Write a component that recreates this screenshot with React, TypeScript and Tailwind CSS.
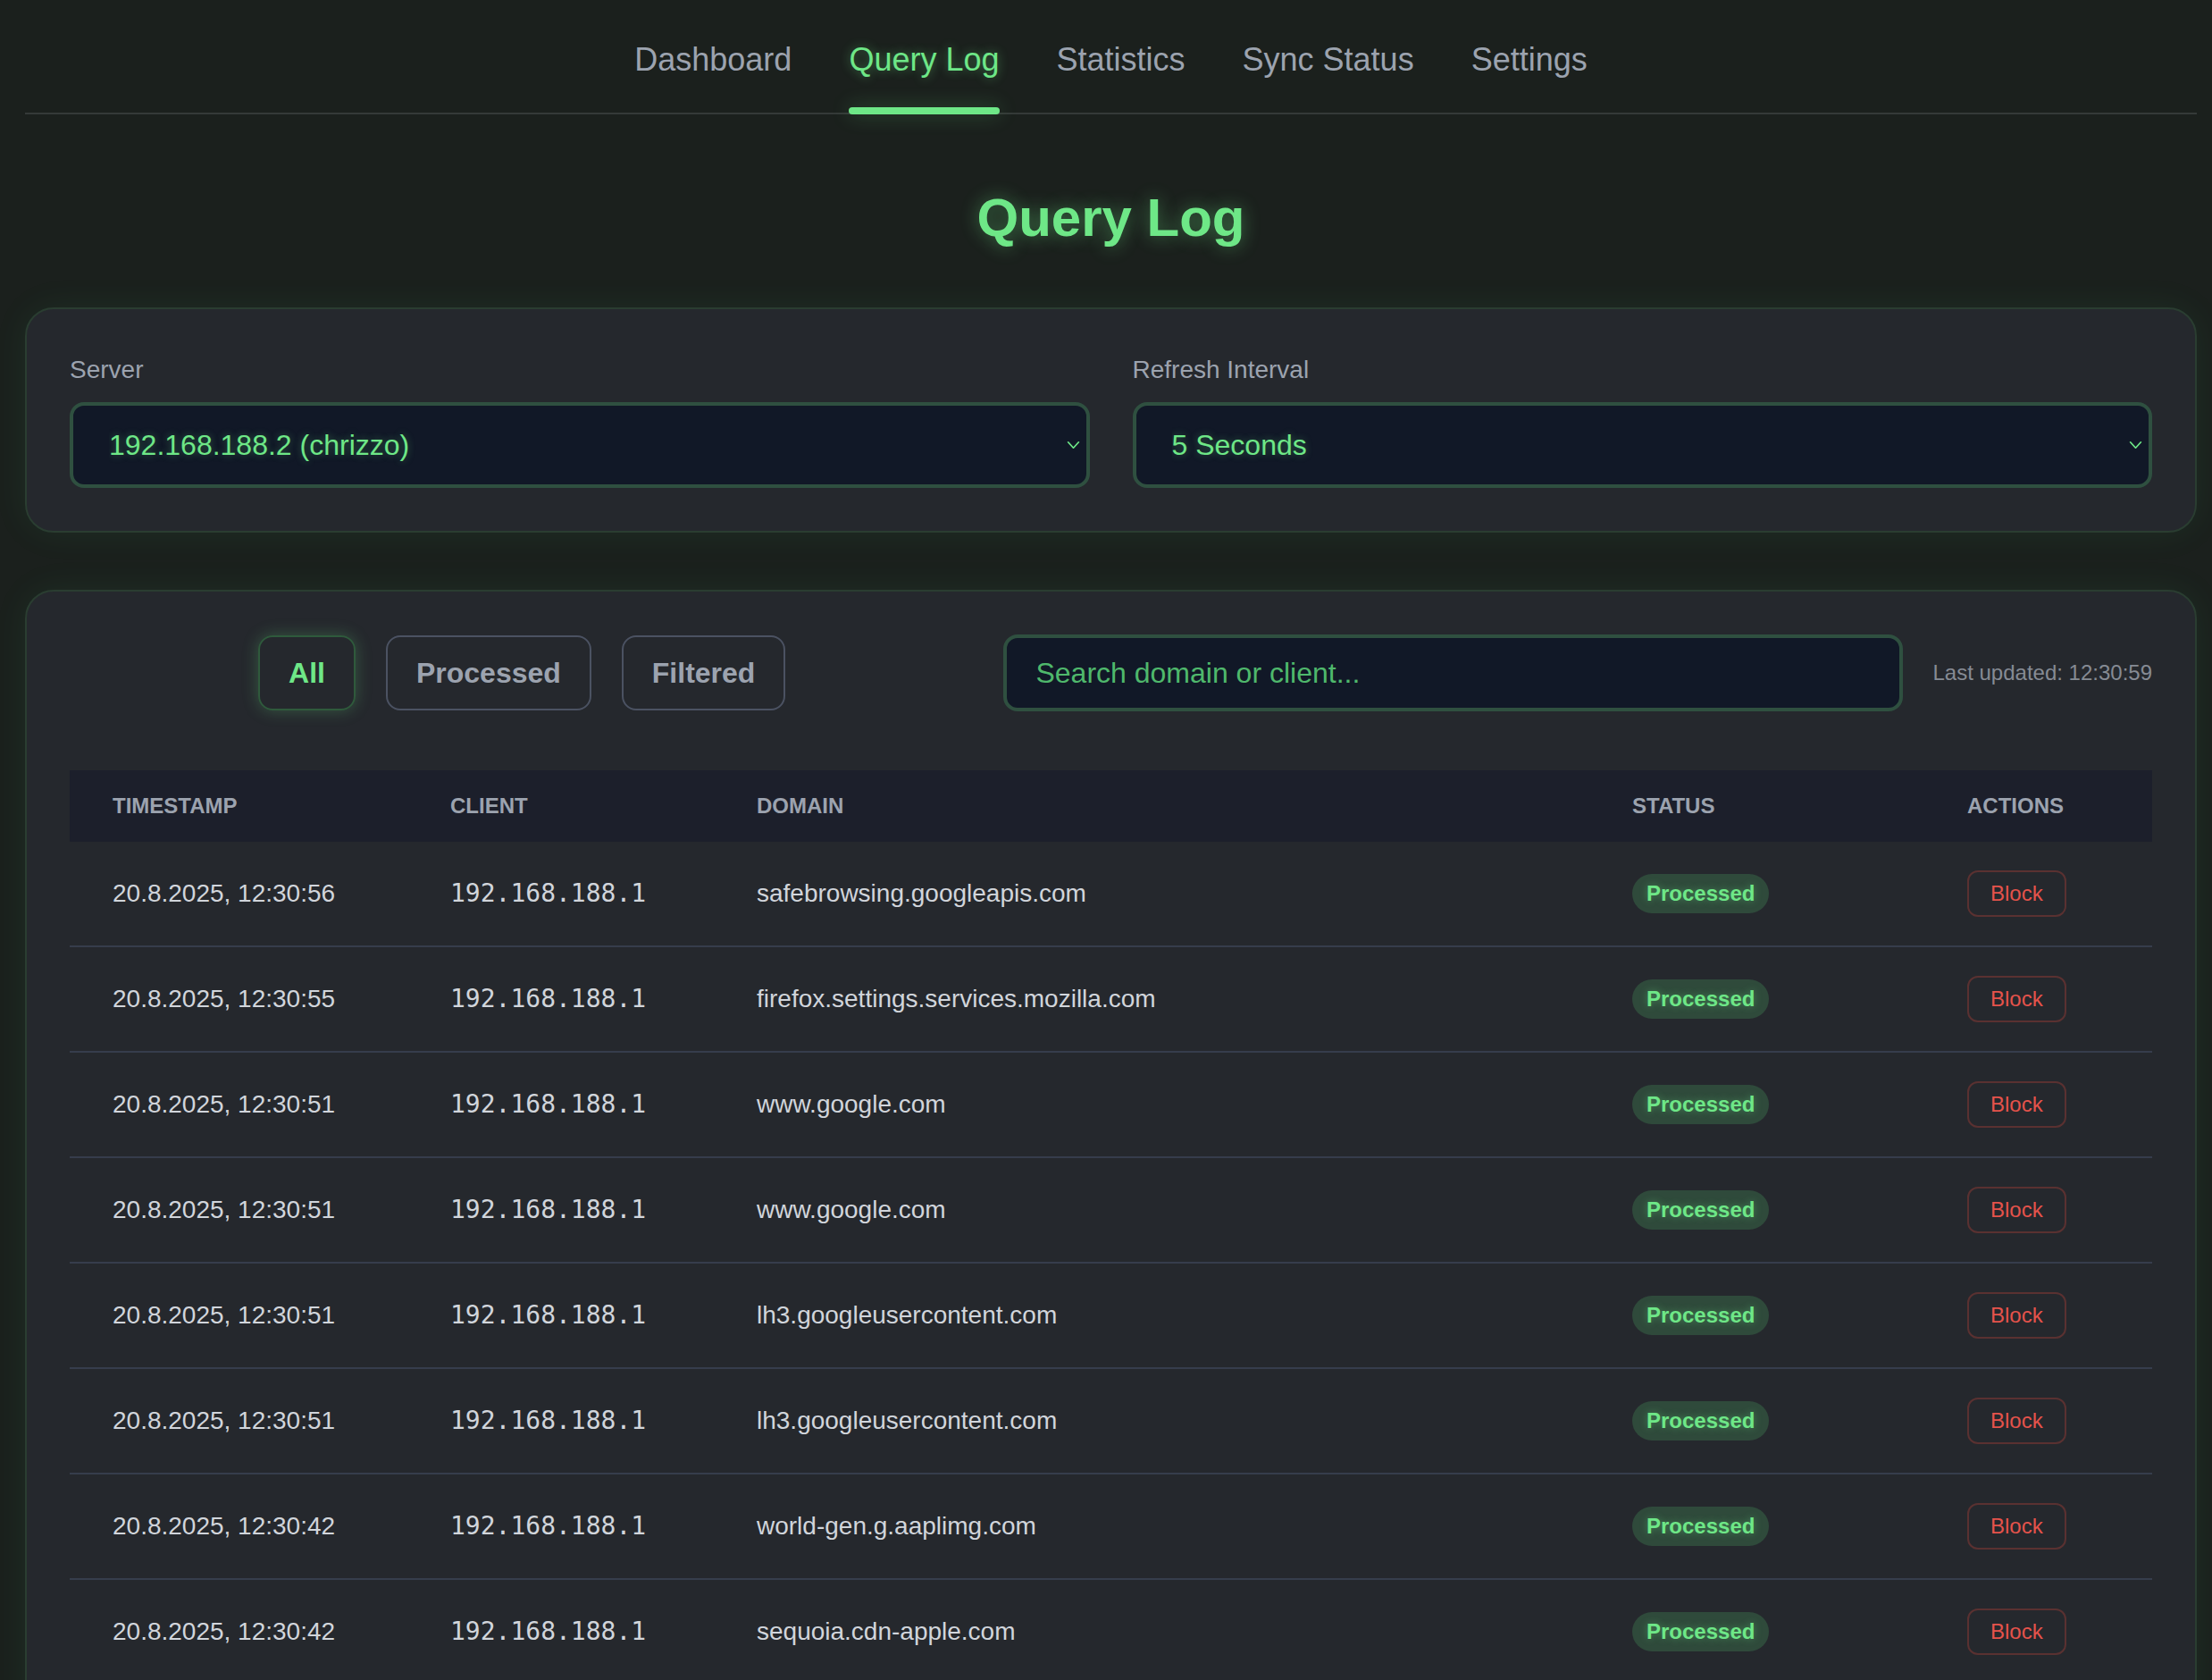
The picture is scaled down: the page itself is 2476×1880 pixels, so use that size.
import { FC } from 'react';

interface QueryRow {
  time: string;
  client: string;
  domain: string;
}

const tabs = ['Dashboard', 'Query Log', 'Statistics', 'Sync Status', 'Settings'];

const rows: QueryRow[] = [
  { time: '20.8.2025, 12:30:56', client: '192.168.188.1', domain: 'safebrowsing.googleapis.com' },
  { time: '20.8.2025, 12:30:55', client: '192.168.188.1', domain: 'firefox.settings.services.mozilla.com' },
  { time: '20.8.2025, 12:30:51', client: '192.168.188.1', domain: 'www.google.com' },
  { time: '20.8.2025, 12:30:51', client: '192.168.188.1', domain: 'www.google.com' },
  { time: '20.8.2025, 12:30:51', client: '192.168.188.1', domain: 'lh3.googleusercontent.com' },
  { time: '20.8.2025, 12:30:51', client: '192.168.188.1', domain: 'lh3.googleusercontent.com' },
  { time: '20.8.2025, 12:30:42', client: '192.168.188.1', domain: 'world-gen.g.aaplimg.com' },
  { time: '20.8.2025, 12:30:42', client: '192.168.188.1', domain: 'sequoia.cdn-apple.com' },
];

const Chevron: FC<{ className?: string }> = ({ className }) => (
  <svg
    viewBox="0 0 14 9"
    className={className}
    fill="none"
    stroke="currentColor"
    strokeWidth="1.6"
    strokeLinecap="round"
    strokeLinejoin="round"
  >
    <path d="M1.5 1.5l5.5 6 5.5-6" />
  </svg>
);

const SelectField: FC<{ label: string; value: string }> = ({ label, value }) => (
  <div>
    <label className="mb-[16px] block text-[28px] leading-[40px] text-[#9ca3af]">{label}</label>
    <div className="relative">
      <select
        defaultValue={value}
        className="h-[96px] w-full appearance-none rounded-[16px] border-4 border-[#2f5040] bg-[#111827] pl-[40px] pr-[48px] text-[32px] text-[#6ee787] outline-none [text-shadow:0_0_8px_rgba(110,231,135,0.35)]"
      >
        <option>{value}</option>
      </select>
      <Chevron className="pointer-events-none absolute right-[11px] top-1/2 h-[10px] w-[15px] -translate-y-1/2 text-[#6ee787]" />
    </div>
  </div>
);

export default function App() {
  return (
    <div className="min-h-screen bg-[#1b201d] pl-[28px] pr-[17px] pb-[60px] font-['Liberation_Sans',Arial,sans-serif]">
      <nav className="flex justify-center gap-[64px] border-b-2 border-[#353a38]">
        {tabs.map((t) =>
          t === 'Query Log' ? (
            <a
              key={t}
              className="relative pt-[40px] pb-[32px] text-[36px] leading-[54px] text-[#6ee787] [text-shadow:0_0_12px_rgba(110,231,135,0.45)]"
            >
              {t}
              <span className="absolute left-0 right-0 -bottom-[2px] h-[8px] rounded-full bg-[#6ee787] shadow-[0_0_22px_rgba(110,231,135,0.3)]" />
            </a>
          ) : (
            <a key={t} className="pt-[40px] pb-[32px] text-[36px] leading-[54px] text-[#9ca3af]">
              {t}
            </a>
          )
        )}
      </nav>

      <h1 className="mt-[80px] mb-[64px] text-center text-[60px] font-bold leading-[72px] text-[#6ee787] [text-shadow:0_0_20px_rgba(110,231,135,0.45)]">
        Query Log
      </h1>

      <section className="grid grid-cols-2 gap-[48px] rounded-[32px] border-2 border-[#2a3d31] bg-[#25282d] p-[48px] shadow-[0_0_40px_rgba(74,222,128,0.07)]">
        <SelectField label="Server" value="192.168.188.2 (chrizzo)" />
        <SelectField label="Refresh Interval" value="5 Seconds" />
      </section>

      <section className="mt-[64px] rounded-[32px] border-2 border-[#2a3d31] bg-[#25282d] p-[48px] shadow-[0_0_40px_rgba(74,222,128,0.07)]">
        <div className="flex items-center gap-[33px]">
          <div className="flex flex-1 justify-center gap-[34px]">
            <button className="rounded-[16px] border-2 border-[#2f5a3c] px-[32px] py-[16px] text-[32px] font-bold leading-[48px] text-[#6ee787] shadow-[0_0_18px_rgba(110,231,135,0.25)]">
              All
            </button>
            <button className="rounded-[16px] border-2 border-[#4b5262] px-[32px] py-[16px] text-[32px] font-bold leading-[48px] text-[#9ca3af]">
              Processed
            </button>
            <button className="rounded-[16px] border-2 border-[#4b5262] px-[32px] py-[16px] text-[32px] font-bold leading-[48px] text-[#9ca3af]">
              Filtered
            </button>
          </div>
          <input
            placeholder="Search domain or client..."
            className="h-[86px] w-[1007px] shrink-0 rounded-[16px] border-4 border-[#2f5040] bg-[#111827] px-[32px] text-[32px] text-[#6ee787] outline-none placeholder:text-[#4fb86c]"
          />
          <span className="whitespace-nowrap text-[24px] text-[#868b94]">Last updated: 12:30:59</span>
        </div>

        <table className="mt-[66px] w-full table-fixed border-collapse">
          <colgroup>
            <col className="w-[378px]" />
            <col className="w-[343px]" />
            <col className="w-[980px]" />
            <col className="w-[375px]" />
            <col />
          </colgroup>
          <thead className="bg-[#1c1f2b]">
            <tr>
              {['Timestamp', 'Client', 'Domain', 'Status', 'Actions'].map((h) => (
                <th
                  key={h}
                  className="px-[48px] py-[24px] text-left text-[24px] font-bold uppercase leading-[32px] text-[#9ca3af]"
                >
                  {h}
                </th>
              ))}
            </tr>
          </thead>
          <tbody>
            {rows.map((r, i) => (
              <tr key={i} className="border-b-2 border-[#363d4c]">
                <td className="px-[48px] py-[32px] text-[28px] leading-[40px] text-[#d1d5db]">{r.time}</td>
                <td className="px-[48px] py-[32px] font-['DejaVu_Sans_Mono',monospace] text-[28px] leading-[40px] text-[#d1d5db]">
                  {r.client}
                </td>
                <td className="px-[48px] py-[32px] text-[28px] leading-[40px] text-[#d1d5db]">{r.domain}</td>
                <td className="px-[48px] py-[32px]">
                  <div className="flex">
                    <span className="rounded-full bg-[#2f4a3b] px-[16px] py-[6px] text-[24px] font-bold leading-[32px] text-[#6ee787] [text-shadow:0_0_8px_rgba(110,231,135,0.4)]">
                      Processed
                    </span>
                  </div>
                </td>
                <td className="px-[48px] py-[32px]">
                  <div className="flex">
                    <button className="rounded-[12px] border-2 border-[#5a3131] px-[24px] py-[8px] text-[24px] leading-[32px] text-[#e5534b]">
                      Block
                    </button>
                  </div>
                </td>
              </tr>
            ))}
          </tbody>
        </table>
      </section>
    </div>
  );
}
